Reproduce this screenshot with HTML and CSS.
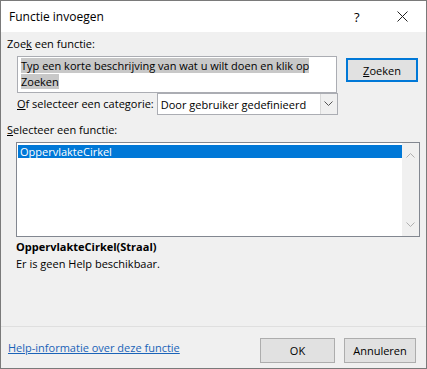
FILE: index.html
```html
<!DOCTYPE html>
<html lang="nl">
  <head>
    <meta charset="UTF-8" />
    <title>Functie invoegen</title>
    <link rel="stylesheet" href="styles.css">
  </head>
  <body>
    <div class="dialog">
      <div class="titlebar">
        <span class="title">Functie invoegen</span>
        <span class="help">?</span>
        <span class="close">
          <svg width="11" height="11" viewBox="0 0 11 11"><path d="M0.5 0.5 L10.5 10.5 M10.5 0.5 L0.5 10.5" stroke="#222" stroke-width="1" fill="none"/></svg>
        </span>
      </div>

      <div class="content">
        <div class="label">Zoe<u>k</u> een functie:</div>
        <div class="search-row">
          <div class="search-box"><span class="sel">Typ een korte beschrijving van wat u wilt doen en klik op Zoeken</span></div>
          <button class="btn btn-default"><u>Z</u>oeken</button>
        </div>

        <div class="category-row">
          <span class="label"><u>O</u>f selecteer een categorie:</span>
          <div class="select">
            <span class="select-text">Door gebruiker gedefinieerd</span>
            <span class="select-arrow">
              <svg width="9" height="6" viewBox="0 0 9 6"><path d="M0.5 0.5 L4.5 4.5 L8.5 0.5" stroke="#555" fill="none"/></svg>
            </span>
          </div>
        </div>

        <div class="label list-label"><u>S</u>electeer een functie:</div>
        <div class="listbox">
          <div class="list-items">
            <div class="list-item selected">OppervlakteCirkel</div>
          </div>
          <div class="scrollbar">
            <svg width="9" height="6" viewBox="0 0 9 6"><path d="M0.5 5.5 L4.5 1.5 L8.5 5.5" stroke="#b0b0b0" fill="none"/></svg>
            <svg width="9" height="6" viewBox="0 0 9 6"><path d="M0.5 0.5 L4.5 4.5 L8.5 0.5" stroke="#b0b0b0" fill="none"/></svg>
          </div>
        </div>

        <div class="signature">OppervlakteCirkel(Straal)</div>
        <div class="desc">Er is geen Help beschikbaar.</div>
      </div>

      <div class="footer">
        <a class="help-link" href="#">Help-informatie over deze functie</a>
        <button class="btn btn-ok">OK</button>
        <button class="btn">Annuleren</button>
      </div>
    </div>
  </body>
</html>
```

FILE: styles.css
```css
body {
  margin: 0;
  font-family: "Open Sans", "Noto Sans", sans-serif;
  font-size: 11px;
  color: #000;
}

.dialog {
  width: 425px;
  height: 367px;
  border: 1px solid #7a7a7a;
  background: #f0f0f0;
  display: flex;
  flex-direction: column;
}

.titlebar {
  height: 31px;
  background: #fff;
  display: flex;
  align-items: center;
  padding-left: 8px;
}

.title {
  flex: 1;
  font-size: 12px;
}

.help {
  width: 16px;
  margin-right: 27px;
  font-size: 13px;
}

.close {
  width: 11px;
  margin-right: 18px;
  display: flex;
}

.content {
  padding: 4px 0 0 6px;
  flex: 1;
}

.label {
  line-height: 16px;
}

.search-row {
  display: flex;
  align-items: flex-start;
  margin-top: 4px;
  margin-left: 10px;
}

.search-box {
  width: 313px;
  height: 34px;
  border: 1px solid #abadb3;
  background: #fff;
  padding: 1px 2px 0 3px;
  line-height: 16px;
}

.sel {
  background: #c8c8c8;
}

.btn {
  font-family: inherit;
  font-size: 11px;
  width: 72px;
  height: 24px;
  border: 1px solid #adadad;
  background: #e1e1e1;
  color: #000;
  padding: 0;
}

.btn-default {
  margin-left: 9px;
  margin-top: 2px;
  border: 2px solid #0078d7;
}

.category-row {
  display: flex;
  align-items: center;
  margin-left: 10px;
}

.select {
  margin-left: 3px;
  width: 179px;
  height: 20px;
  border: 1px solid #abadb3;
  background: #fff;
  display: flex;
  align-items: center;
  white-space: nowrap;
}

.select-text {
  flex: 1;
  padding-left: 3px;
}

.select-arrow {
  width: 16px;
  height: 20px;
  border-left: 1px solid #d9d9d9;
  background: #f0f0f0;
  display: flex;
  align-items: center;
  justify-content: center;
}

.list-label {
  margin-top: 7px;
}

.listbox {
  margin-top: 4px;
  margin-left: 9px;
  width: 402px;
  height: 93px;
  border: 1px solid #828790;
  background: #fff;
  display: flex;
}

.list-items {
  flex: 1;
  padding: 2px 0 0 1px;
}

.list-item {
  line-height: 13px;
  padding-left: 2px;
}

.selected {
  background: #0078d7;
  color: #fff;
}

.scrollbar {
  width: 17px;
  background: #f0f0f0;
  display: flex;
  flex-direction: column;
  justify-content: space-between;
  align-items: center;
  padding: 9px 0 8px;
}

.signature {
  margin-top: 2px;
  margin-left: 9px;
  font-weight: bold;
  line-height: 16px;
}

.desc {
  margin-left: 9px;
  margin-top: 1px;
  line-height: 16px;
}

.footer {
  border-top: 1px solid #dfdfdf;
  height: 42px;
  display: flex;
  align-items: flex-start;
  padding: 11px 10px 0 7px;
  box-sizing: border-box;
}

.help-link {
  flex: 1;
  color: #1a63b8;
  text-decoration: underline;
  line-height: 16px;
  margin-top: 2px;
}

.footer .btn {
  height: 25px;
}

.footer .btn-ok {
  width: 75px;
  margin-right: 9px;
}
```
